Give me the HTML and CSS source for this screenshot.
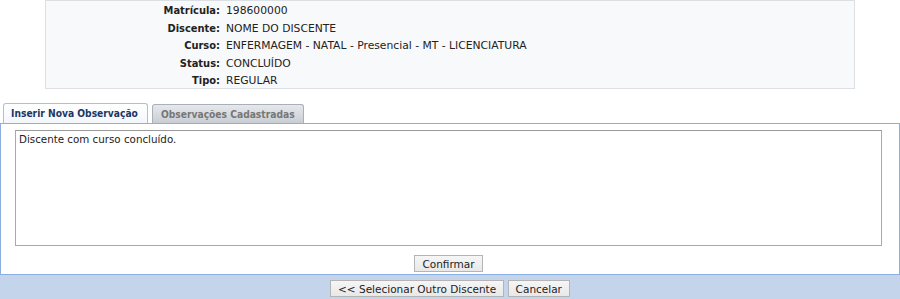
FILE: index.html
```html
<!DOCTYPE html>
<html lang="pt-BR">

<head>
    <meta charset="UTF-8">
    <title>Observações do Discente</title>
    <link rel="stylesheet" href="styles.css">
</head>

<body>
<div class="dados">
    <table class="visualizacao">
        <tr><th>Matrícula:</th><td>198600000</td></tr>
        <tr><th>Discente:</th><td>NOME DO DISCENTE</td></tr>
        <tr><th>Curso:</th><td>ENFERMAGEM - NATAL - Presencial - MT - LICENCIATURA</td></tr>
        <tr><th>Status:</th><td>CONCLUÍDO</td></tr>
        <tr><th>Tipo:</th><td>REGULAR</td></tr>
    </table>
</div>

<!-- Abas -->
<div class="abas">
    <span class="aba ativa">Inserir Nova Observação</span>
    <span class="aba">Observações Cadastradas</span>
</div>

<div class="painel">
    <textarea class="observacao">Discente com curso concluído.</textarea>
    <div class="acoes">
        <button>Confirmar</button>
    </div>
</div>

<div class="rodape">
    <button>&lt;&lt; Selecionar Outro Discente</button>
    <button>Cancelar</button>
</div>
</body>

</html>
```

FILE: styles.css
```css
body {
    font-family: 'DejaVu Sans', Verdana, sans-serif;
    font-size: 10.75px;
    margin: 0;
    padding: 0;
    color: #222;
    background-color: #fff;
}

.dados {
    width: 808px;
    margin: 0 auto 14px 45px;
    background-color: #f8f9fb;
    border: 1px solid #dcdfe3;
    height: 87px;
}

.visualizacao {
    border-collapse: collapse;
    margin-top: 1px;
}

.visualizacao th {
    width: 174px;
    text-align: right;
    font-family: 'DejaVu Sans Condensed', 'DejaVu Sans', sans-serif;
    font-size: 11px;
    font-weight: bold;
    padding: 0 6px 0 0;
    height: 17.5px;
    line-height: 17.5px;
    white-space: nowrap;
}

.visualizacao td {
    padding: 0;
    height: 17.5px;
    line-height: 17.5px;
    white-space: nowrap;
}

.abas {
    display: flex;
    align-items: flex-end;
    gap: 4px;
    padding-left: 3px;
    height: 20px;
}

.aba {
    font-family: 'DejaVu Sans Condensed', 'DejaVu Sans', sans-serif;
    font-size: 10.2px;
    font-weight: bold;
    border: 1px solid #a7b0bb;
    border-bottom: none;
    border-radius: 3px 3px 0 0;
    padding: 0 8px;
    height: 18px;
    line-height: 19px;
    color: #777;
    background: linear-gradient(#e6e8eb, #c9ced4);
}

.aba.ativa {
    height: 19px;
    line-height: 20px;
    padding: 0 9px 0 7px;
    color: #1c3766;
    background: linear-gradient(#ffffff, #f3f7fc);
    border-color: #a9c0de;
}

.painel {
    border: 1px solid #8daee0;
    background-color: #fff;
    padding: 6px 17px 2px 14px;
}

.observacao {
    display: block;
    box-sizing: border-box;
    width: 100%;
    height: 116px;
    margin: 0;
    padding: 2px 3px;
    font-family: 'DejaVu Sans', Verdana, sans-serif;
    font-size: 10.3px;
    color: #222;
    border: 1px solid #a9a9a9;
    border-top-color: #999;
    resize: none;
}

.acoes {
    text-align: center;
    margin-top: 9px;
}

button {
    font-family: 'DejaVu Sans', Verdana, sans-serif;
    font-size: 10.5px;
    color: #222;
    height: 17px;
    padding: 0 7px;
    background: linear-gradient(#f6f6f6, #e8e8e8);
    border: 1px solid #b4b4b4;
    border-radius: 0;
}

.rodape {
    background-color: #c4d4eb;
    text-align: center;
    padding: 5px 0 8px;
}
```
